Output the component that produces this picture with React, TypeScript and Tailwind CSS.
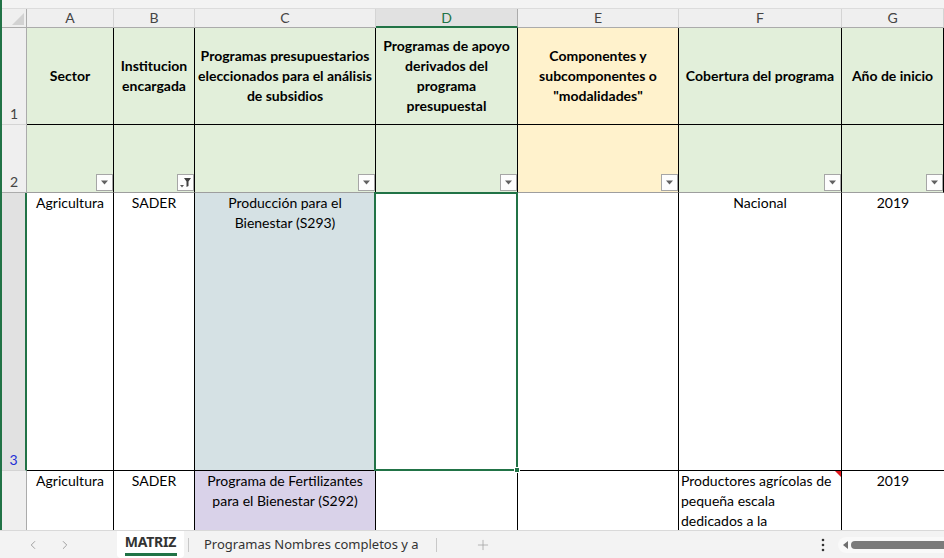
import React from 'react';
import { ChevronLeft, ChevronRight, Plus } from 'lucide-react';

const GREEN = 'bg-[#e2efda]';
const YELLOW = 'bg-[#fff2cc]';

// column widths incl. right border: A..F, G takes the rest
const colW = ['w-[87px]', 'w-[81px]', 'w-[181px]', 'w-[142px]', 'w-[161px]', 'w-[163px]'];
const letters = ['A', 'B', 'C', 'D', 'E', 'F', 'G'];

const FilterButton: React.FC<{ active?: boolean }> = ({ active }) => (
  <div className="w-[17px] h-[17px] border border-[#a6a6a6] bg-[#fdfdfd] flex items-center justify-center">
    {active ? (
      <svg width="15" height="15" viewBox="0 0 15 15">
        <polygon points="2,10 6,10 4,12.5" fill="#595959" />
        <polygon points="6,3 13,3 10.5,6.5 10.5,11 8.5,12 8.5,6.5" fill="#404040" />
      </svg>
    ) : (
      <svg width="9" height="5" viewBox="0 0 9 5">
        <polygon points="1,0.5 8,0.5 4.5,4.5" fill="#606060" />
      </svg>
    )}
  </div>
);

const RowHeader: React.FC<{ n: string; h: string; selected?: boolean; last?: boolean }> = ({ n, h, selected, last }) => (
  <div
    className={`w-[25px] shrink-0 ${h} flex items-end justify-center pb-[1px] text-[14px] leading-[18px] ${
      selected
        ? 'bg-[#e1e1e1] text-[#1f2fd6] border-r-2 border-r-[#217346]'
        : 'bg-[#efefef] text-[#444] border-r border-r-[#ababab]'
    } ${last ? 'border-b border-b-[#ababab]' : 'border-b border-b-[#d4d4d4]'}`}
  >
    {n}
  </div>
);

export default function App() {
  const headerTexts: React.ReactNode[] = [
    'Sector',
    <>Institucion<br />encargada</>,
    <>Programas presupuestarios<br />eleccionados para el análisis<br />de subsidios</>,
    <>Programas de apoyo<br />derivados del<br />programa<br />presupuestal</>,
    <>Componentes y<br />subcomponentes o<br />"modalidades"</>,
    'Cobertura del programa',
    'Año de inicio',
  ];
  const headerBg = [GREEN, GREEN, GREEN, GREEN, YELLOW, GREEN, GREEN];

  return (
    <div className="w-[944px] h-[558px] overflow-hidden flex flex-col bg-white text-black font-[family-name:Lato,sans-serif]">
      <div className="flex-1 flex flex-col overflow-hidden border-l-2 border-[#217346]">
        {/* top strip */}
        <div className="h-[9px] shrink-0 bg-[#f3f3f3] border-b border-[#dcdcdc]" />

        {/* column letters */}
        <div className="flex h-[19px] shrink-0 text-[14px] text-[#444]">
          <div className="w-[25px] shrink-0 bg-[#efefef] border-r border-b border-[#ababab] relative">
            <svg className="absolute right-[2px] bottom-[2px]" width="12" height="12" viewBox="0 0 12 12">
              <polygon points="12,0 12,12 0,12" fill="#d2d2d2" />
            </svg>
          </div>
          {letters.map((l, i) => (
            <div
              key={l}
              className={`${i < 6 ? colW[i] + ' shrink-0' : 'flex-1'} flex items-center justify-center leading-[18px] ${
                l === 'D'
                  ? 'bg-[#e1e1e1] text-[#217346] border-r border-r-[#ababab] border-b-2 border-b-[#217346]'
                  : 'bg-[#efefef] border-r border-r-[#d4d4d4] border-b border-b-[#ababab]'
              }`}
            >
              {l}
            </div>
          ))}
        </div>

        {/* row 1: headers */}
        <div className="flex h-[97px] shrink-0">
          <RowHeader n="1" h="h-[97px]" />
          {headerTexts.map((t, i) => (
            <div
              key={i}
              className={`${i < 6 ? colW[i] + ' shrink-0' : 'flex-1'} ${headerBg[i]} border-r border-b border-black flex items-center justify-center text-center font-bold text-[14px] leading-[20px] whitespace-nowrap`}
            >
              <div>{t}</div>
            </div>
          ))}
        </div>

        {/* row 2: filter row */}
        <div className="flex h-[68px] shrink-0">
          <RowHeader n="2" h="h-[68px]" last />
          {letters.map((l, i) => (
            <div
              key={l}
              className={`${i < 6 ? colW[i] + ' shrink-0' : 'flex-1'} ${headerBg[i]} border-r border-black border-b border-b-[#9e9e9e] flex items-end justify-end pb-[1px] ${
                i === 6 ? 'justify-start pl-[84px]' : ''
              }`}
            >
              <FilterButton active={l === 'B'} />
            </div>
          ))}
        </div>

        {/* row 3 */}
        <div className="flex h-[278px] shrink-0 text-[14px] leading-[20px]">
          <RowHeader n="3" h="h-[278px]" selected />
          <div className={`${colW[0]} shrink-0 border-r border-b border-black text-center`}>Agricultura</div>
          <div className={`${colW[1]} shrink-0 border-r border-b border-black text-center`}>SADER</div>
          <div className={`${colW[2]} shrink-0 bg-[#d5e1e4] border-r border-b border-black text-center`}>
            Producción para el
            <br />
            Bienestar (S293)
          </div>
          <div className={`${colW[3]} shrink-0 border-r border-b border-black relative`}>
            {/* active cell selection */}
            <div className="absolute -left-[2px] -top-[1px] -right-[1px] -bottom-[1px] border-2 border-[#217346]" />
            <div className="absolute -right-[3px] -bottom-[3px] w-[6px] h-[6px] bg-[#217346] border border-white" />
          </div>
          <div className={`${colW[4]} shrink-0 border-r border-b border-black`} />
          <div className={`${colW[5]} shrink-0 border-r border-b border-black text-center`}>Nacional</div>
          <div className="flex-1 border-b border-black">
            <div className="w-[102px] text-center">2019</div>
          </div>
        </div>

        {/* row 4 */}
        <div className="flex flex-1 text-[14px] leading-[20px] overflow-hidden">
          <div className="w-[25px] shrink-0 bg-[#efefef] border-r border-[#ababab]" />
          <div className={`${colW[0]} shrink-0 border-r border-black text-center`}>Agricultura</div>
          <div className={`${colW[1]} shrink-0 border-r border-black text-center`}>SADER</div>
          <div className={`${colW[2]} shrink-0 bg-[#d9d2e9] border-r border-black text-center whitespace-nowrap`}>
            Programa de Fertilizantes
            <br />
            para el Bienestar (S292)
          </div>
          <div className={`${colW[3]} shrink-0 border-r border-black`} />
          <div className={`${colW[4]} shrink-0 border-r border-black`} />
          <div className={`${colW[5]} shrink-0 border-r border-black pl-[2px] relative whitespace-nowrap`}>
            Productores agrícolas de
            <br />
            pequeña escala
            <br />
            dedicados a la
            <svg className="absolute right-0 top-0" width="6" height="6" viewBox="0 0 6 6">
              <polygon points="0,0 6,0 6,6" fill="#e0161b" />
            </svg>
          </div>
          <div className="flex-1">
            <div className="w-[102px] text-center">2019</div>
          </div>
        </div>
      </div>

      {/* sheet tabs bar */}
      <div className="h-[28px] shrink-0 bg-[#f3f3f3] border-t border-[#d9d9d9] flex items-stretch font-[family-name:'Noto_Sans',sans-serif] text-[14px] text-[#333]">
        <div className="w-[117px] shrink-0 flex items-center pl-[26px] gap-[18px] text-[#9a9a9a]">
          <ChevronLeft size={14} strokeWidth={1.6} />
          <ChevronRight size={14} strokeWidth={1.6} />
        </div>
        <div className="w-[67px] shrink-0 bg-white rounded-b-[4px] flex flex-col items-center justify-center">
          <span className="font-bold leading-[18px] tracking-[-0.2px]">MATRIZ</span>
          <span className="w-[52px] h-[3px] bg-[#217346] mt-[2px]" />
        </div>
        <div className="w-[20px] shrink-0 flex items-center">
          <span className="ml-[4px] w-px h-[14px] bg-[#c8c8c8]" />
        </div>
        <div className="w-[232px] shrink-0 flex items-center whitespace-nowrap text-[13px]">Programas Nombres completos y a</div>
        <div className="w-px shrink-0 self-center h-[14px] bg-[#c8c8c8]" />
        <div className="w-[92px] shrink-0 flex items-center justify-center text-[#a3a3a3]">
          <Plus size={16} strokeWidth={1.2} />
        </div>
        <div className="flex-1" />
        <div className="w-[30px] shrink-0 flex items-center justify-center">
          <svg width="4" height="14" viewBox="0 0 4 14">
            <circle cx="2" cy="2" r="1.3" fill="#333" />
            <circle cx="2" cy="7" r="1.3" fill="#333" />
            <circle cx="2" cy="12" r="1.3" fill="#333" />
          </svg>
        </div>
        <div className="w-[106px] shrink-0 flex items-center">
          <div className="w-full h-[16px] bg-[#f9f9f9] rounded-l-full flex items-center pl-[5px] gap-[3px]">
            <svg width="5" height="8" viewBox="0 0 5 8">
              <polygon points="5,0 5,8 0,4" fill="#6e6e6e" />
            </svg>
            <div className="flex-1 h-[8px] rounded-l-full bg-[#7b7b7b]" />
          </div>
        </div>
      </div>
    </div>
  );
}
